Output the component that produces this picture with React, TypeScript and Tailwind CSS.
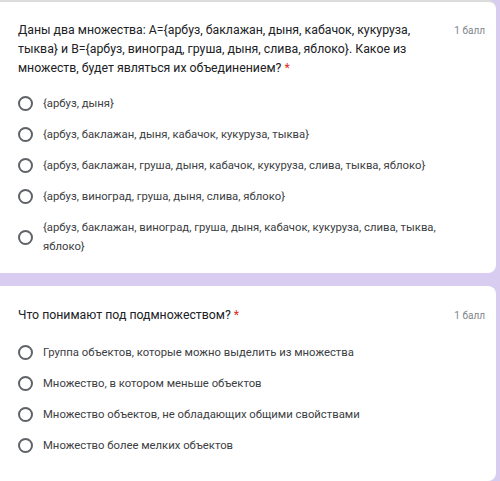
import React from 'react';

type Question = {
  title: string;
  options: string[];
};

const questions: Question[] = [
  {
    title:
      'Даны два множества: A={арбуз, баклажан, дыня, кабачок, кукуруза, тыква} и B={арбуз, виноград, груша, дыня, слива, яблоко}. Какое из множеств, будет являться их объединением?',
    options: [
      '{арбуз, дыня}',
      '{арбуз, баклажан, дыня, кабачок, кукуруза, тыква}',
      '{арбуз, баклажан, груша, дыня, кабачок, кукуруза, слива, тыква, яблоко}',
      '{арбуз, виноград, груша, дыня, слива, яблоко}',
      '{арбуз, баклажан, виноград, груша, дыня, кабачок, кукуруза, слива, тыква, яблоко}',
    ],
  },
  {
    title: 'Что понимают под подмножеством?',
    options: [
      'Группа объектов, которые можно выделить из множества',
      'Множество, в котором меньше объектов',
      'Множество объектов, не обладающих общими свойствами',
      'Множество более мелких объектов',
    ],
  },
];

const Radio: React.FC = () => (
  <span className="block h-[15px] w-[15px] shrink-0 rounded-full border-2 border-[#5f6368]" />
);

const QuestionCard: React.FC<{ q: Question; first?: boolean }> = ({ q, first }) => (
  <div
    className={
      'mr-[4px] rounded-r-[8px] bg-white pl-[18px] pr-[11px] ' +
      (first ? 'border-t-2 border-[#dcdcdc] pt-[19px] pb-[11px]' : 'pt-[20px] pb-[20px]')
    }
  >
    <div className="flex items-start gap-[24px]">
      <p className="flex-1 text-[12.3px] leading-[19px] text-[#202124]">
        {q.title}
        <span className="text-[#d93025]"> *</span>
      </p>
      <span className="text-[10px] leading-[19px] text-[#80868b] whitespace-nowrap">1 балл</span>
    </div>
    <div className={(first ? 'mt-[10px]' : 'mt-[12px]') + ' mr-[30px] flex flex-col'}>
      {q.options.map((o) => (
        <label key={o} className="flex items-center gap-[10px] py-[6px]">
          <Radio />
          <span className="text-[11.3px] leading-[19px] text-[#3c4043]">{o}</span>
        </label>
      ))}
    </div>
  </div>
);

const App: React.FC = () => {
  return (
    <div
      className="h-[481px] overflow-hidden bg-[#d8cdf0]"
      style={{ fontFamily: 'Roboto, "Noto Sans", sans-serif' }}
    >
      <div className="flex flex-col gap-[13px]">
        <QuestionCard q={questions[0]} first />
        <QuestionCard q={questions[1]} />
      </div>
    </div>
  );
};

export default App;
